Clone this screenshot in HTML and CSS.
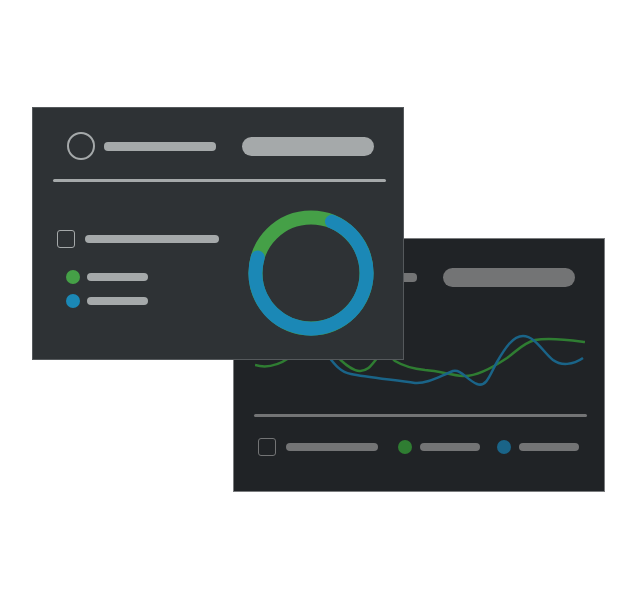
FILE: index.html
```html
<!DOCTYPE html>
<html lang="en">
<head>
    <meta charset="UTF-8">
    <meta name="viewport" content="width=device-width, initial-scale=1.0">
    <title>Dashboard Cards</title>
    <link rel="stylesheet" href="styles.css">
</head>
<body>

    <div class="canvas">
        <!-- back card: line chart -->
        <div class="card card-back">
            <div class="card-head">
                <div class="avatar"></div>
                <div class="bar bar-title"></div>
                <div class="pill"></div>
            </div>
            <svg class="chart" width="330" height="100" viewBox="0 0 330 100">
                <path class="line-green" d="M0 65 C10 68 22 66 34 58 C44 50 60 44 70 48 C80 52 92 70 104 71 C114 72 118 62 124 56 C130 50 134 56 140 61 C150 67 160 69 170 70 C185 71 195 75 208 76 C222 77 240 66 252 58 C262 51 268 43 280 40 C295 37 315 40 330 42"/>
                <path class="line-blue" d="M0 30 C20 20 50 30 70 52 C78 62 84 72 96 74 C110 77 140 80 160 83 C172 84 185 76 198 71 C206 69 212 80 222 84 C232 88 236 72 242 62 C250 48 258 36 268 36 C280 36 288 52 298 60 C306 66 318 65 328 58"/>
            </svg>
            <div class="divider"></div>
            <div class="legend-row">
                <div class="check"></div>
                <div class="bar bar-wide"></div>
                <span class="dot dot-green"></span>
                <div class="bar bar-short"></div>
                <span class="dot dot-blue"></span>
                <div class="bar bar-short"></div>
            </div>
        </div>

        <!-- front card: donut -->
        <div class="card card-front">
            <div class="card-head">
                <div class="avatar"></div>
                <div class="bar bar-title"></div>
                <div class="pill"></div>
            </div>
            <div class="divider"></div>
            <div class="card-body">
                <div class="legend">
                    <div class="legend-item">
                        <div class="check"></div>
                        <div class="bar bar-long"></div>
                    </div>
                    <div class="legend-item item-green">
                        <span class="dot dot-green"></span>
                        <div class="bar bar-short"></div>
                    </div>
                    <div class="legend-item item-blue">
                        <span class="dot dot-blue"></span>
                        <div class="bar bar-short"></div>
                    </div>
                </div>
                <svg class="donut" width="126" height="126" viewBox="0 0 126 126">
                    <circle cx="63" cy="63" r="55.5" fill="none" stroke="#45a047" stroke-width="14"/>
                    <circle cx="63" cy="63" r="55.5" fill="none" stroke="#1b88b6" stroke-width="14"
                        stroke-linecap="round" stroke-dasharray="255.3 400" transform="rotate(-67.8 63 63)"/>
                </svg>
            </div>
        </div>
    </div>

</body>
</html>
```

FILE: styles.css
```css
body {
    margin: 0;
    background-color: #fff;
    font-family: "Liberation Sans", Arial, sans-serif;
}
.canvas {
    position: relative;
    width: 640px;
    height: 601px;
}

.card {
    position: absolute;
    width: 372px;
    box-sizing: border-box;
    border: 1px solid #6f7274;
    display: flex;
    flex-direction: column;
}
.card-front {
    left: 32px;
    top: 107px;
    height: 253px;
    background-color: #2e3235;
    border-color: #55595c;
}
.card-back {
    left: 233px;
    top: 238px;
    height: 254px;
    background-color: #202326;
    border-color: #7a7c7e;
}

.card-head {
    display: flex;
    align-items: center;
    padding: 24px 29px 0 34px;
}
.card-back .card-head {
    padding-top: 24px;
}
.avatar {
    width: 28px;
    height: 28px;
    box-sizing: border-box;
    border: 2.5px solid #a5a9aa;
    border-radius: 50%;
}
.bar {
    height: 8px;
    border-radius: 4px;
    background-color: #a5a9aa;
}
.bar-title {
    width: 112px;
    height: 9px;
    margin-left: 9px;
}
.pill {
    width: 132px;
    height: 19px;
    border-radius: 10px;
    margin-left: auto;
    background-color: #a5a9aa;
}

.divider {
    height: 3px;
    border-radius: 2px;
    background-color: #a5a9aa;
    margin: 19px 17px 0 20px;
}

.card-body {
    display: flex;
    align-items: flex-start;
    margin-top: 28px;
    padding: 0 29px 0 24px;
}
.legend {
    padding-top: 20px;
}
.legend-item {
    display: flex;
    align-items: center;
}
.item-green {
    margin-top: 22px;
    padding-left: 9px;
}
.item-blue {
    margin-top: 10px;
    padding-left: 9px;
}
.check {
    width: 18px;
    height: 18px;
    box-sizing: border-box;
    border: 1.5px solid #a5a9aa;
    border-radius: 3px;
    flex-shrink: 0;
}
.bar-long {
    width: 134px;
    margin-left: 10px;
}
.legend-item .bar-short {
    width: 61px;
    margin-left: 7px;
}
.dot {
    width: 14px;
    height: 14px;
    border-radius: 50%;
    flex-shrink: 0;
}
.dot-green { background-color: #45a047; }
.dot-blue { background-color: #1b88b6; }
.donut {
    margin-left: auto;
}

/* back card tones */
.card-back .avatar,
.card-back .check { border-color: #737475; }
.card-back .bar,
.card-back .pill,
.card-back .divider { background-color: #737475; }
.card-back .dot-green { background-color: #2f7d32; }
.card-back .dot-blue { background-color: #1a6488; }

.chart {
    display: block;
    margin: 9px 0 0 21px;
}
.chart path {
    fill: none;
    stroke-width: 2.5;
}
.line-green { stroke: #2f7d32; }
.line-blue { stroke: #1a6488; }
.card-back .divider {
    margin-top: 14px;
}

.legend-row {
    display: flex;
    align-items: center;
    margin-top: 21px;
    padding-left: 24px;
}
.legend-row .bar-wide {
    width: 92px;
    margin-left: 10px;
}
.legend-row .dot-green {
    margin-left: 20px;
}
.legend-row .dot-blue {
    margin-left: 17px;
}
.legend-row .bar-short {
    width: 60px;
    margin-left: 8px;
}
```
